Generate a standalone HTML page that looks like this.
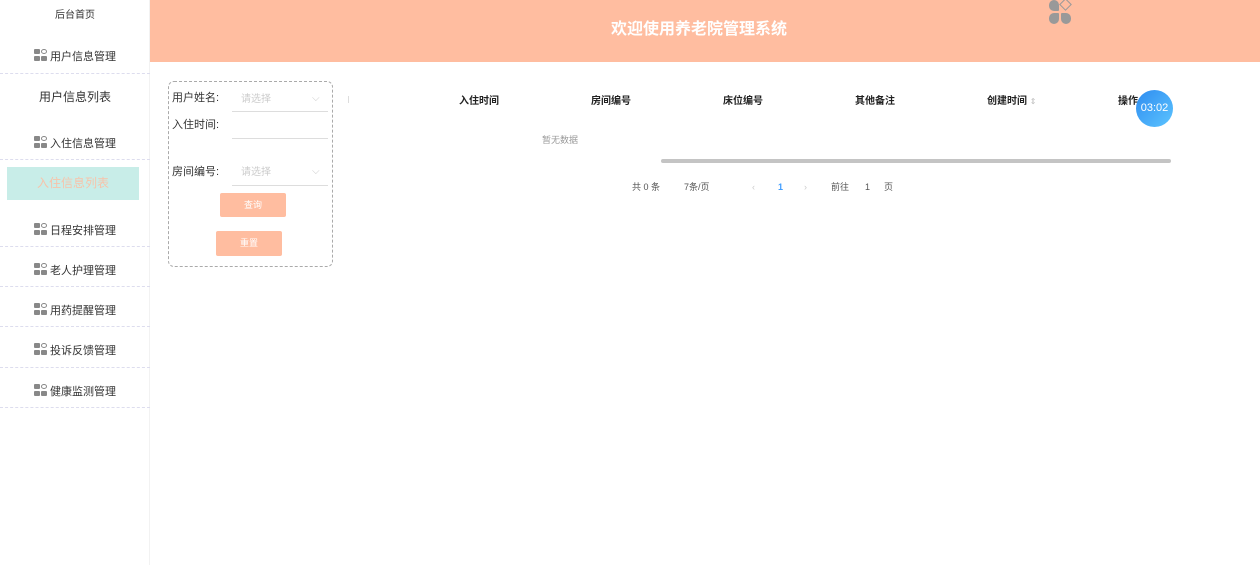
<!DOCTYPE html>
<html><head><meta charset="utf-8"><style>
*{margin:0;padding:0;box-sizing:border-box}
body{width:1260px;height:565px;background:#fff;font-family:"Liberation Sans","Noto Sans CJK SC",sans-serif;position:relative;overflow:hidden;color:#333}
.a{position:absolute}
.side{left:0;top:0;width:150px;height:565px;border-right:1px solid #f2f2f2}
.mi{position:absolute;left:0;width:150px;font-size:11px;color:#333;text-align:center;line-height:14px}
.ic{display:inline-block;width:13px;height:12px;vertical-align:-1px;margin-right:3px;position:relative}
.ic i{position:absolute;width:6px;height:5px;background:#888;border-radius:1px}
.dash{position:absolute;left:0;width:150px;border-top:1px dashed #dde}
.hdr{left:150px;top:0;width:1110px;height:62px;background:#ffbda0}
.th{top:96px;font-size:10px;font-weight:bold;color:#222;line-height:12px}
.lbl{font-size:11px;color:#333;line-height:13px}
.ph{font-size:10px;color:#ccc;line-height:12px}
.ln{border-bottom:1px solid #ddd;width:96px;left:232px}
.btn{background:#ffbda0;color:#fff;font-size:9px;text-align:center;border-radius:2px}
.pg{top:181px;font-size:9px;color:#555;line-height:12px}
</style></head><body>
<div class="a side">
<div class="mi" style="top:9px;font-size:10px">后台首页</div>
<div class="mi" style="top:49px"><span class="ic"><i style="left:0;top:0"></i><i style="left:7px;top:0;background:none;border:1px solid #888;border-radius:50%"></i><i style="left:0;top:7px"></i><i style="left:7px;top:7px"></i></span>用户信息管理</div>
<div class="dash" style="top:73px"></div>
<div class="mi" style="top:90px;font-size:12px">用户信息列表</div>
<div class="mi" style="top:136px"><span class="ic"><i style="left:0;top:0"></i><i style="left:7px;top:0;background:none;border:1px solid #888;border-radius:50%"></i><i style="left:0;top:7px"></i><i style="left:7px;top:7px"></i></span>入住信息管理</div>
<div class="dash" style="top:159px"></div>
<div class="a" style="left:7px;top:167px;width:132px;height:33px;background:#c8ede8;color:#f7c3aa;font-size:12px;text-align:center;line-height:33px">入住信息列表</div>
<div class="mi" style="top:223px"><span class="ic"><i style="left:0;top:0"></i><i style="left:7px;top:0;background:none;border:1px solid #888;border-radius:50%"></i><i style="left:0;top:7px"></i><i style="left:7px;top:7px"></i></span>日程安排管理</div>
<div class="dash" style="top:246px"></div>
<div class="mi" style="top:263px"><span class="ic"><i style="left:0;top:0"></i><i style="left:7px;top:0;background:none;border:1px solid #888;border-radius:50%"></i><i style="left:0;top:7px"></i><i style="left:7px;top:7px"></i></span>老人护理管理</div>
<div class="dash" style="top:286px"></div>
<div class="mi" style="top:303px"><span class="ic"><i style="left:0;top:0"></i><i style="left:7px;top:0;background:none;border:1px solid #888;border-radius:50%"></i><i style="left:0;top:7px"></i><i style="left:7px;top:7px"></i></span>用药提醒管理</div>
<div class="dash" style="top:326px"></div>
<div class="mi" style="top:343px"><span class="ic"><i style="left:0;top:0"></i><i style="left:7px;top:0;background:none;border:1px solid #888;border-radius:50%"></i><i style="left:0;top:7px"></i><i style="left:7px;top:7px"></i></span>投诉反馈管理</div>
<div class="dash" style="top:367px"></div>
<div class="mi" style="top:384px"><span class="ic"><i style="left:0;top:0"></i><i style="left:7px;top:0;background:none;border:1px solid #888;border-radius:50%"></i><i style="left:0;top:7px"></i><i style="left:7px;top:7px"></i></span>健康监测管理</div>
<div class="dash" style="top:407px"></div>
</div>
<div class="a hdr"><div class="a" style="left:461px;top:20px;color:#fff;font-size:16px;font-weight:bold;line-height:20px">欢迎使用养老院管理系统</div>
<div class="a" style="left:899px;top:0px;width:24px;height:24px">
<i class="a" style="left:0;top:0;width:10px;height:11px;background:#999;border-radius:5px 5px 1px 5px"></i>
<i class="a" style="left:12px;top:0;width:9px;height:9px;border:1.5px solid #999;transform:rotate(45deg)"></i>
<i class="a" style="left:0;top:13px;width:10px;height:11px;background:#999;border-radius:5px 1px 5px 5px"></i>
<i class="a" style="left:12px;top:13px;width:10px;height:11px;background:#999;border-radius:1px 5px 5px 5px"></i></div></div>
<div class="a" style="left:168px;top:81px;width:165px;height:186px;border:1px dashed #aaa;border-radius:6px"></div>
<div class="a lbl" style="left:172px;top:92px">用户姓名:</div>
<div class="a ph" style="left:241px;top:94px">请选择</div><div class="a ph" style="left:312px;top:93px">⌵</div>
<div class="a ln" style="top:111px"></div>
<div class="a lbl" style="left:172px;top:119px">入住时间:</div>
<div class="a ln" style="top:138px"></div>
<div class="a lbl" style="left:172px;top:166px">房间编号:</div>
<div class="a ph" style="left:241px;top:167px">请选择</div><div class="a ph" style="left:312px;top:166px">⌵</div>
<div class="a ln" style="top:185px"></div>
<div class="a btn" style="left:220px;top:193px;width:66px;height:24px;line-height:24px">查询</div>
<div class="a btn" style="left:216px;top:231px;width:66px;height:25px;line-height:25px">重置</div>
<div class="a" style="left:348px;top:96px;width:1px;height:7px;background:#ddd"></div>
<div class="a th" style="left:459px">入住时间</div>
<div class="a th" style="left:591px">房间编号</div>
<div class="a th" style="left:723px">床位编号</div>
<div class="a th" style="left:855px">其他备注</div>
<div class="a th" style="left:987px">创建时间 <span style="color:#bbb;font-weight:normal;font-size:8px">⇕</span></div>
<div class="a th" style="left:1118px">操作</div>
<div class="a" style="left:1136px;top:90px;width:37px;height:37px;border-radius:50%;background:linear-gradient(135deg,#2e8cf0,#5cc4ff);color:#fff;font-size:11px;line-height:37px;text-align:center">03:02</div>
<div class="a" style="left:542px;top:134px;font-size:9px;color:#999;line-height:12px">暂无数据</div>
<div class="a" style="left:661px;top:159px;width:510px;height:4px;background:#c4c4c4;border-radius:2px"></div>
<div class="a pg" style="left:632px">共 0 条</div>
<div class="a pg" style="left:684px">7条/页</div>
<div class="a pg" style="left:752px;color:#ccc">‹</div>
<div class="a pg" style="left:778px;color:#409eff;font-weight:bold">1</div>
<div class="a pg" style="left:804px;color:#ccc">›</div>
<div class="a pg" style="left:831px">前往</div>
<div class="a pg" style="left:865px">1</div>
<div class="a pg" style="left:884px">页</div>
</body></html>
